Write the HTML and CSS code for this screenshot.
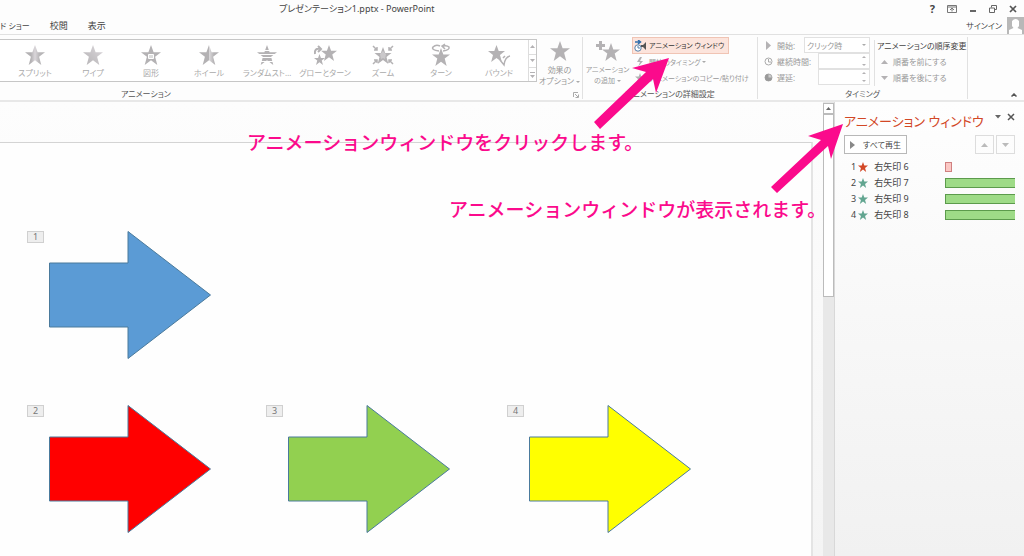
FILE: index.html
```html
<!DOCTYPE html>
<html lang="ja">
<head>
<meta charset="utf-8">
<title>プレゼンテーション1.pptx - PowerPoint</title>
<link rel="stylesheet" href="styles.css">
</head>
<body>
<svg class="defs" width="0" height="0" aria-hidden="true">
  <defs>
    <symbol id="star" viewBox="0 0 20 20"><path d="M10 0l2.600 7.200H20l-5.900 4.600L16.300 20 10 15.200 3.700 20l2.200-8.200L0 7.200h7.400z"/></symbol>
    <symbol id="arrow" viewBox="0 0 162 128"><path d="M.5 32H79V.5L161.500 64 79 127.500V96H.5z"/></symbol>
    <linearGradient id="split"><stop offset="0" stop-color="#b4b2b4"/><stop offset=".3" stop-color="#b4b2b4"/><stop offset=".5" stop-color="#dad6da"/><stop offset=".7" stop-color="#bab8ba"/><stop offset="1" stop-color="#b4b2b4"/></linearGradient>
    <linearGradient id="wipe" x1="0" y1="1" x2="1" y2="0"><stop offset="0" stop-color="#b4b2b4"/><stop offset="1" stop-color="#dcd8dc"/></linearGradient>
    <linearGradient id="wheel"><stop offset="0" stop-color="#b4b2b4"/><stop offset=".5" stop-color="#b4b2b4"/><stop offset=".51" stop-color="#dcdadc"/><stop offset=".75" stop-color="#b4b2b4"/></linearGradient>
  </defs>
</svg>
<header class="titlebar">
  <h1 class="doc-title">プレゼンテーション1.pptx - PowerPoint</h1>
  <div class="window-tools">
    <button class="bare help" aria-label="ヘルプ">?</button>
    <button class="bare" aria-label="リボンの表示オプション"><svg width="10" height="8"><path d="M.5.5h9v7h-9zM.5 2h9M5 6.500V3.500M3 5l2-2 2 2" fill="none" stroke="#777"/></svg></button>
    <button class="bare" aria-label="最小化"><svg width="8" height="8"><path d="M1 6h6" stroke="#666" stroke-width="2"/></svg></button>
    <button class="bare" aria-label="元に戻す"><svg width="8" height="8"><path d="M2.500 2.500V.5h5v4h-2M.5 3h5v4.500h-5z" fill="none" stroke="#666"/></svg></button>
    <button class="bare" aria-label="閉じる"><svg width="8" height="8"><path d="M1 1l6 6M7 1L1 7" stroke="#555" stroke-width="1.700"/></svg></button>
  </div>
</header>
<nav class="tabs">
  <a class="kana" href="#slideshow">ド ショー</a>
  <a href="#review">校閲</a>
  <a href="#view">表示</a>
  <a class="signin kana" href="#signin">サインイン</a>
  <svg class="avatar" width="17" height="17"><path fill="#b8b8b8" d="M0 0h17v17H0z"/><path fill="#fff" d="M5 4q3.500-4 7 0v5l-1.500 2 4.500 2v4H2v-4l4.500-2L5 9z"/></svg>
</nav>
<section class="ribbon">
  <div class="group group-anim">
    <div class="group-body">
      <div class="gallery">
        <button class="effect"><svg width="20" height="20"><use href="#star" fill="url(#split)"/></svg>スプリット</button>
        <button class="effect"><svg width="20" height="20"><use href="#star" fill="url(#wipe)"/></svg>ワイプ</button>
        <button class="effect"><svg width="20" height="20"><use href="#star"/><path d="M7.500 9.500h5v4h-5z" fill="#ddd" stroke="#fff"/></svg>図形</button>
        <button class="effect"><svg width="20" height="20"><use href="#star" fill="url(#wheel)"/></svg>ホイール</button>
        <button class="effect"><svg width="20" height="20"><use href="#star"/><path d="M0 5.500h20M0 9.500h20M0 12.500h20M0 16.500h20" stroke="#fff"/></svg>ランダムスト…</button>
        <button class="effect"><svg width="24" height="20"><use href="#star" x="8" width="16" height="16"/><use href="#star" x="1" y="9" width="11" height="11"/><path d="M2 9q-1-6 5-5M5 1l3 3-3 3" fill="none" stroke="#b4b2b4" stroke-width="2"/></svg>グローとターン</button>
        <button class="effect"><svg width="22" height="20"><use href="#star" x="2" y="2" width="18" height="17"/><path d="M8 9l3-3 3 3-1 5-2-1-2 1z" fill="#cac8ca"/><path d="M1 1l4 4M2 5h3V2M21 1l-4 4M20 5h-3V2M1 19l4-4M2 15h3v3M21 19l-4-4M20 15h-3v3" fill="none" stroke="#b4b2b4" stroke-width="1.500"/></svg>ズーム</button>
        <button class="effect"><svg width="20" height="20"><use href="#star" y="3" x="1" width="18" height="18"/><path d="M8 6Q0 5 2 2q3-3 7-1M12 6q7-1 6-4-2-2-6-1M14-1l-3 2 3 3" fill="none" stroke="#b4b2b4" stroke-width="1.500"/></svg>ターン</button>
        <button class="effect"><svg width="22" height="20"><use href="#star" width="17" height="17"/><path d="M12 15l4 5q1-8 6-9M15 13l2-2" fill="none" stroke="#b4b2b4" stroke-width="1.500"/></svg>バウンド</button>
        <div class="gallery-nav">
          <button aria-label="上へ"><svg width="5" height="3"><path d="M0 3l2.500-3L5 3z"/></svg></button>
          <button aria-label="下へ"><svg width="5" height="3"><path d="M0 0l2.500 3L5 0z"/></svg></button>
          <button aria-label="その他"><svg width="5" height="6"><path d="M0 0h5v1H0zM0 3l2.500 3L5 3z"/></svg></button>
        </div>
      </div>
      <button class="big"><svg width="20" height="20"><use href="#star"/></svg><span>効果の<br>オプション <i class="caret"></i></span></button>
    </div>
    <div class="group-name">アニメーション
      <button class="bare launcher" aria-label="効果のその他のオプション"><svg width="6" height="6"><path d="M.5 5V.5H5M2 2l3 3M5.500 2.500v3h-3" fill="none" stroke="#aaa"/></svg></button></div>
  </div>
  <div class="group group-detail">
    <div class="group-body">
      <button class="big add"><svg width="24" height="20"><use href="#star" x="6" y="2" width="18" height="18"/><path d="M4.500 0v9M0 4.500h9" stroke="#b4b2b4" stroke-width="3"/></svg><span>アニメーション<br>の追加 <i class="caret"></i></span></button>
      <div class="stack">
        <button class="row-btn active" aria-pressed="true"><svg width="13" height="12"><path d="M1 2h5M4 0l2.500 2L4 4" fill="none" stroke="#2f6dab" stroke-width="1.500"/><circle cx="4" cy="8" r="3.200" fill="#fff" stroke="#557fa8"/><path d="M4 6v2h2" fill="none" stroke="#557fa8"/><path d="M7 5h2l3-3v8L9 7H7z" fill="#555"/></svg>アニメーション ウィンドウ</button>
        <button class="row-btn"><svg width="13" height="12"><path d="M6 1L3 6h3l-2 5 5-6H6l2-4z"/></svg>開始のタイミング <i class="caret"></i></button>
        <button class="row-btn"><svg width="13" height="12"><use href="#star" x="1" y="1" width="10" height="10"/></svg>アニメーションのコピー/貼り付け</button>
      </div>
    </div>
    <div class="group-name">アニメーションの詳細設定</div>
  </div>
  <div class="group group-timing">
    <div class="group-body">
      <div class="fields">
        <div class="field"><svg width="9" height="9"><path d="M2 0l5 4.500L2 9z"/></svg><label for="start">開始:</label>
          <span class="select-wrap"><select id="start"><option>クリック時</option></select><i class="caret"></i></span></div>
        <div class="field"><svg width="9" height="9"><path d="M4.500 2v3H7" fill="none" stroke="#aaa"/><circle cx="4.500" cy="4.500" r="3.500" fill="none" stroke="#aaa"/></svg><label for="duration">継続時間:</label>
          <span class="spin"><input id="duration" type="text"><svg width="4" height="10"><path d="M0 2l2-2 2 2zM0 8l2 2 2-2z"/></svg></span></div>
        <div class="field"><svg width="9" height="9"><circle cx="4.500" cy="4.500" r="3.500" fill="#ccc" stroke="#aaa"/><path d="M4.500 1v3.500H8A3.500 3.500 0 1 1 4.500 1z" fill="#999"/></svg><label for="delay">遅延:</label>
          <span class="spin"><input id="delay" type="text"><svg width="4" height="10"><path d="M0 2l2-2 2 2zM0 8l2 2 2-2z"/></svg></span></div>
      </div>
      <div class="reorder">
        <h2>アニメーションの順序変更</h2>
        <button><svg width="7" height="4"><path d="M0 4l3.500-4L7 4z"/></svg>順番を前にする</button>
        <button><svg width="7" height="4"><path d="M0 0l3.500 4L7 0z"/></svg>順番を後にする</button>
      </div>
    </div>
    <div class="group-name">タイミング</div>
  </div>
  <button class="bare collapse" aria-label="リボンを折りたたむ"><svg width="6" height="4"><path d="M.5 3.500L3 1l2.500 2.500" fill="none" stroke="#555" stroke-width="1.500"/></svg></button>
</section>
<main class="workspace">
  <div class="editor">
    <div class="slide">
      <span class="tag t1">1</span><svg class="shape s1" width="162" height="128"><use href="#arrow" fill="#5b9bd5"/></svg>
      <span class="tag t2">2</span><svg class="shape s2" width="162" height="128"><use href="#arrow" fill="#f00"/></svg>
      <span class="tag t3">3</span><svg class="shape s3" width="162" height="128"><use href="#arrow" fill="#92d050"/></svg>
      <span class="tag t4">4</span><svg class="shape s4" width="162" height="128"><use href="#arrow" fill="#ff0"/></svg>
    </div>
  </div>
  <div class="scrollbar">
    <button class="scroll-up" aria-label="上にスクロール"><svg width="5" height="3"><path d="M0 3l2.500-3L5 3z"/></svg></button>
    <div class="thumb"></div>
  </div>
  <aside class="pane">
    <div class="pane-head">
      <h2>アニメーション ウィンドウ</h2>
      <button class="bare" aria-label="作業ウィンドウのオプション"><svg width="6" height="4"><path d="M0 0h6L3 3.500z" fill="#666"/></svg></button>
      <button class="bare" aria-label="閉じる"><svg width="8" height="8"><path d="M1 1l6 6M7 1L1 7" stroke="#555" stroke-width="1.500"/></svg></button>
    </div>
    <div class="pane-tools">
      <button class="play"><svg width="5" height="8"><path d="M0 0l5 4-5 4z"/></svg>すべて再生</button>
      <button class="move" aria-label="前へ移動"><svg width="7" height="4"><path d="M0 4l3.500-4L7 4z"/></svg></button>
      <button class="move" aria-label="後へ移動"><svg width="7" height="4"><path d="M0 0l3.500 4L7 0z"/></svg></button>
    </div>
    <ol class="timeline">
      <li><span>1</span><svg class="emphasis" width="10" height="10"><use href="#star"/></svg><span class="name">右矢印 6</span><span class="bar short"></span></li>
      <li><span>2</span><svg width="10" height="10"><use href="#star"/></svg><span class="name">右矢印 7</span><span class="bar"></span></li>
      <li><span>3</span><svg width="10" height="10"><use href="#star"/></svg><span class="name">右矢印 9</span><span class="bar"></span></li>
      <li><span>4</span><svg width="10" height="10"><use href="#star"/></svg><span class="name">右矢印 8</span><span class="bar"></span></li>
    </ol>
  </aside>
</main>
<svg class="pointers" width="1024" height="220" aria-hidden="true">
  <path d="M669 58L632 68l14 4-52 50 6 7 53-50 3 14z"/>
  <path d="M843 124l-35 12 13 4-50 47 6 6 51-47 3 13z"/>
</svg>
<p class="note note-click">アニメーションウィンドウをクリックします。</p>
<p class="note note-shown">アニメーションウィンドウが表示されます。</p>
</body>
</html>
```
FILE: styles.css
```css
* { box-sizing: border-box; }
body {
  margin: 0;
  min-height: 100vh;
  position: relative;
  display: flex;
  flex-direction: column;
  overflow: hidden;
  background: #fdfdfd;
  color: #444;
  font: 9px/11px "Noto Sans", "Noto Sans CJK JP", sans-serif;
  font-feature-settings: "palt";
}
button, input, select { font: inherit; font-feature-settings: inherit; color: inherit; padding: 0; margin: 0; border: 0; background: none; border-radius: 0; }
h1, h2, p, ol { margin: 0; padding: 0; font-weight: 400; }
svg { display: block; flex: none; }
.defs, .pointers, .note { position: absolute; }
.bare { display: flex; align-items: center; }
.caret { display: inline-block; border: 2px solid transparent; border-top-color: #aaa; border-bottom: 0; vertical-align: middle; }

.titlebar { display: flex; justify-content: space-between; align-items: center; height: 17px; padding: 0 7px 0 279px; }
.doc-title { font-size: 9px; }
.window-tools { display: flex; align-items: center; gap: 12px; }
.help { font-size: 11px; font-weight: 700; }
.tabs { display: flex; align-items: center; height: 17px; }
.tabs a { color: #444; text-decoration: none; margin-right: 20px; white-space: nowrap; }
.tabs .kana { font-size: 8px; }
.tabs .signin { margin: 0 5px 0 auto; }

.ribbon { display: flex; flex: none; height: 68px; border-top: 1px solid #e1e1e1; border-bottom: 2px solid #e8e8e8; color: #999; font-size: 8px; }
.ribbon svg { fill: #b4b2b4; }
.group { display: flex; flex-direction: column; border-right: 1px solid #e1e1e1; margin: 2px 0 1px; flex: none; }
.group-body { display: flex; flex: 1; }
.group-name { display: flex; justify-content: center; height: 10px; line-height: 9px; color: #555; white-space: nowrap; }
.group-anim { width: 583px; }
.group-anim .group-name { justify-content: space-between; padding: 0 3px 0 121px; }
.group-detail { width: 175px; }
.group-timing { width: 210px; }
.gallery { display: grid; grid-template-columns: repeat(9, 58px) 1fr; width: 537px; height: 43px; margin-top: 2px; padding-left: 6px; border: 1px solid #c6c6c6; border-left: 0; background: #fff; }
.effect { display: flex; flex-direction: column; align-items: center; justify-content: space-between; padding: 5px 0 3px; white-space: nowrap; color: #aaa; }
.effect svg { height: 20px; overflow: visible; }
.gallery-nav { display: grid; grid-template-rows: repeat(3, 1fr); border-left: 1px solid #ddd; }
.gallery-nav button { display: flex; align-items: center; justify-content: center; }
.gallery-nav button + button { border-top: 1px solid #ddd; }
.big { display: flex; flex-direction: column; align-items: center; gap: 3px; width: 45px; padding-top: 4px; white-space: nowrap; }
.add { width: 49px; font-size: 7px; }
.launcher { margin-top: 2px; }
.stack { display: flex; flex-direction: column; font-size: 7px; }
.row-btn { display: flex; align-items: center; gap: 2px; height: 16px; padding: 0 4px 0 1px; border: 1px solid transparent; white-space: nowrap; align-self: flex-start; }
.row-btn.active { height: 17px; color: #333; background: #fce4dc; border-color: #f0c4b4; }
.fields { display: flex; flex-direction: column; width: 112px; padding-left: 6px; }
.field { display: flex; align-items: center; gap: 4px; height: 16px; white-space: nowrap; }
.field > span { margin-left: auto; height: 16px; border: 1px solid #e1e1e1; background: #fff; display: flex; align-items: center; justify-content: flex-end; padding-right: 3px; }
.select-wrap { width: 66px; }
.spin { width: 52px; }
.select-wrap select { appearance: none; flex: 1; min-width: 0; padding-left: 2px; }
.spin input { flex: 1; min-width: 0; }
.reorder { display: flex; flex-direction: column; gap: 5px; margin: 3px 0 3px 4px; padding-left: 2px; border-left: 1px solid #e1e1e1; white-space: nowrap; }
.reorder h2 { font-size: 8px; color: #444; }
.reorder button { display: flex; align-items: center; gap: 5px; padding-left: 4px; }
.collapse { margin: 56px 7px 0 auto; height: 8px; }
.collapse svg { fill: none; }

.workspace { flex: 1; display: flex; }
.editor { flex: 1; padding: 40px 10px 0 0; background: linear-gradient(#fdfdfd, #f4f4f4); }
.slide { position: relative; height: 100%; border-top: 1px solid #d4d4d4; border-right: 2px solid #e4e4e4; background: #fefefe; }
.tag { position: absolute; width: 17px; height: 12px; border: 1px solid #d0d0d0; background: #eee; color: #777; line-height: 10px; text-align: center; }
.shape { position: absolute; stroke: #4a7a9c; }
.t1 { left: 27px; top: 88px; }
.t2 { left: 27px; top: 262px; }
.t3 { left: 266px; top: 262px; }
.t4 { left: 507px; top: 262px; }
.s1 { left: 49px; top: 88px; }
.s2 { left: 49px; top: 262px; }
.s3 { left: 288px; top: 262px; }
.s4 { left: 529px; top: 262px; }
.scrollbar { width: 11px; padding-top: 1px; background: #e8e8e8; }
.scroll-up { display: flex; align-items: center; justify-content: center; width: 100%; height: 11px; border: 1px solid #bbb; background: #fff; }
.scroll-up svg { fill: #666; }
.thumb { height: 183px; border: 1px solid #bbb; background: #fff; }
.pane { width: 190px; border-left: 1px solid #d8d8d8; padding: 9px 9px 0; background: linear-gradient(#fefefe, #f1f1f1); }
.pane-head { display: flex; align-items: flex-start; gap: 6px; height: 24px; }
.pane-head h2 { flex: 1; font-size: 13px; line-height: 20px; color: #d24726; white-space: nowrap; }
.pane-head .bare { height: 12px; }
.pane-tools { display: flex; gap: 2px; height: 19px; font-size: 8px; }
.pane-tools button { display: flex; align-items: center; justify-content: center; border: 1px solid #ddd; width: 19px; }
.pane-tools .play { width: 63px; gap: 8px; margin-right: auto; border-color: #b8b8b8; background: #fff; }
.pane-tools svg { fill: #bbb; }
.pane-tools .play svg { fill: #888; }
.timeline { list-style: none; padding-top: 5px; }
.timeline li { display: flex; align-items: center; gap: 2px; height: 15px; padding-left: 7px; white-space: nowrap; margin-bottom: 1px; }
.timeline svg { fill: #62a590; }
.timeline .emphasis { fill: #d24726; }
.name { flex: 1; padding-left: 4px; }
.bar { width: 70px; height: 10px; border: 1px solid #5c9b4c; border-right: 0; background: #9edb87; }
.short { width: 7px; margin-right: 63px; border: 1px solid #d08080; background: #fbc8c4; }

.pointers { left: 0; top: 0; fill: #fb0a8c; pointer-events: none; }
.note { color: #fb0a8c; font: 500 19px/24px "Noto Sans CJK JP", sans-serif; font-feature-settings: normal; white-space: nowrap; }
.note-click { left: 247px; top: 130px; }
.note-shown { left: 449px; top: 197px; }
```
